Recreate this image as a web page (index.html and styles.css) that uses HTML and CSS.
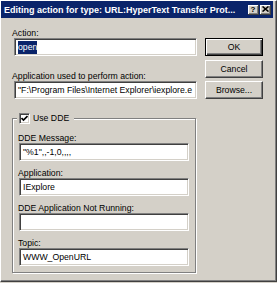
FILE: index.html
```html
<!DOCTYPE html>
<html lang="en">
<head>
	<meta charset="UTF-8">
	<link rel="stylesheet" href="styles.css">
	<title>Editing action</title>
</head>
<body>
	<div class="window">
		<div class="titlebar">
			<span class="title">Editing action for type: URL:HyperText Transfer Prot...</span>
			<div class="caption-btns">
				<span class="cap-btn help">?</span>
				<span class="cap-btn close">
					<svg width="7" height="6" viewBox="0 0 7 6"><path d="M0.5 0.5 L6.5 5.5 M6.5 0.5 L0.5 5.5" stroke="#000" stroke-width="1.6"/></svg>
				</span>
			</div>
		</div>
		<div class="content">
			<div class="main">
				<label class="lbl">Action:</label>
				<div class="edit"><span class="sel">open</span></div>
				<label class="lbl lbl-app">Application used to perform action:</label>
				<div class="edit">"F:\Program Files\Internet Explorer\iexplore.e</div>
				<fieldset class="group">
					<legend>
						<span class="check">
							<svg width="7" height="7" viewBox="0 0 7 7"><path d="M0.5 3 L2.5 5 L6.5 1" fill="none" stroke="#000" stroke-width="1.7"/></svg>
						</span>
						<span>Use DDE</span>
					</legend>
					<div class="field">
						<label class="lbl">DDE Message:</label>
						<div class="edit">"%1",,-1,0,,,,</div>
					</div>
					<div class="field">
						<label class="lbl">Application:</label>
						<div class="edit">IExplore</div>
					</div>
					<div class="field">
						<label class="lbl">DDE Application Not Running:</label>
						<div class="edit"></div>
					</div>
					<div class="field">
						<label class="lbl">Topic:</label>
						<div class="edit">WWW_OpenURL</div>
					</div>
				</fieldset>
			</div>
			<div class="buttons">
				<button class="btn btn-default">OK</button>
				<button class="btn btn-cancel">Cancel</button>
				<button class="btn btn-browse">Browse...</button>
			</div>
		</div>
	</div>
</body>
</html>
```

FILE: styles.css
```css
*{
	padding: 0;
	margin: 0;
	box-sizing: border-box;
	font-family: "Liberation Sans", Arial, sans-serif;
}
body{
	width: 277px;
	height: 283px;
	overflow: hidden;
	background-color: #d4d0c8;
}
.window{
	width: 277px;
	height: 282px;
	border: 1px solid;
	border-color: #fff #404040 #404040 #fff;
	box-shadow: inset -1px -1px #808080;
	padding: 0 3px 2px 0;
	background-color: #d4d0c8;
}
.titlebar{
	height: 17px;
	display: flex;
	align-items: center;
	justify-content: space-between;
	background-color: #0a246a;
	padding: 0 2px 0 3px;
}
.title{
	color: #fff;
	font-size: 9px;
	font-weight: 700;
	white-space: nowrap;
}
.caption-btns{
	display: flex;
	gap: 1px;
}
.cap-btn{
	width: 11px;
	height: 10px;
	display: flex;
	align-items: center;
	justify-content: center;
	background-color: #d4d0c8;
	border-right: 1px solid #404040;
	border-bottom: 1px solid #404040;
	box-shadow: inset 1px 1px #fff, inset -1px -1px #808080;
}
.help{
	font-size: 8px;
	font-weight: 700;
	line-height: 9px;
	color: #000;
}
.close svg{
	display: block;
}
.content{
	display: grid;
	grid-template-columns: 185px 58px;
	column-gap: 8px;
	padding: 10px 0 0 11px;
}
.lbl{
	display: block;
	height: 10px;
	line-height: 10px;
	font-size: 8.7px;
	color: #000;
	white-space: nowrap;
}
.lbl-app{
	margin-top: 15px;
}
.edit{
	height: 18px;
	margin-left: 2px;
	padding: 0 0 0 3px;
	background-color: #fff;
	border: 1px solid;
	border-color: #808080 #fff #fff #808080;
	box-shadow: inset 1px 1px #404040, inset -1px -1px #d4d0c8;
	font-size: 8.7px;
	line-height: 16px;
	color: #000;
	white-space: nowrap;
	overflow: hidden;
}
.sel{
	background-color: #0a246a;
	color: #fff;
	padding: 1px 0 2px;
}
.group{
	margin: 14px 1px 0 0;
	border: 1px solid #808080;
	box-shadow: inset 1px 1px #fff, 1px 1px #fff;
	padding: 9px 6px 6px 5px;
}
.group legend{
	display: flex;
	align-items: center;
	gap: 3px;
	height: 11px;
	margin-left: -1px;
	padding: 0 5px 0 2px;
	background-color: #d4d0c8;
	font-size: 8.7px;
	line-height: 11px;
	color: #000;
}
.check{
	width: 11px;
	height: 11px;
	display: flex;
	align-items: center;
	justify-content: center;
	background-color: #fff;
	border: 1px solid;
	border-color: #808080 #fff #fff #808080;
	box-shadow: inset 1px 1px #404040, inset -1px -1px #d4d0c8;
}
.check svg{
	display: block;
}
.field + .field{
	margin-top: 7px;
}
.group .edit{
	margin-left: 1px;
}
.buttons{
	display: flex;
	flex-direction: column;
	padding-top: 10px;
}
.btn{
	height: 18px;
	background-color: #d4d0c8;
	border: 1px solid;
	border-color: #fff #404040 #404040 #fff;
	box-shadow: inset -1px -1px #808080;
	font-size: 8.7px;
	color: #000;
	outline: none;
}
.btn-default{
	border-color: #000;
	box-shadow: inset 1px 1px #fff, inset -1px -1px #404040, inset -2px -2px #808080;
}
.btn-cancel{
	margin-top: 4px;
}
.btn-browse{
	margin-top: 3px;
}
```
